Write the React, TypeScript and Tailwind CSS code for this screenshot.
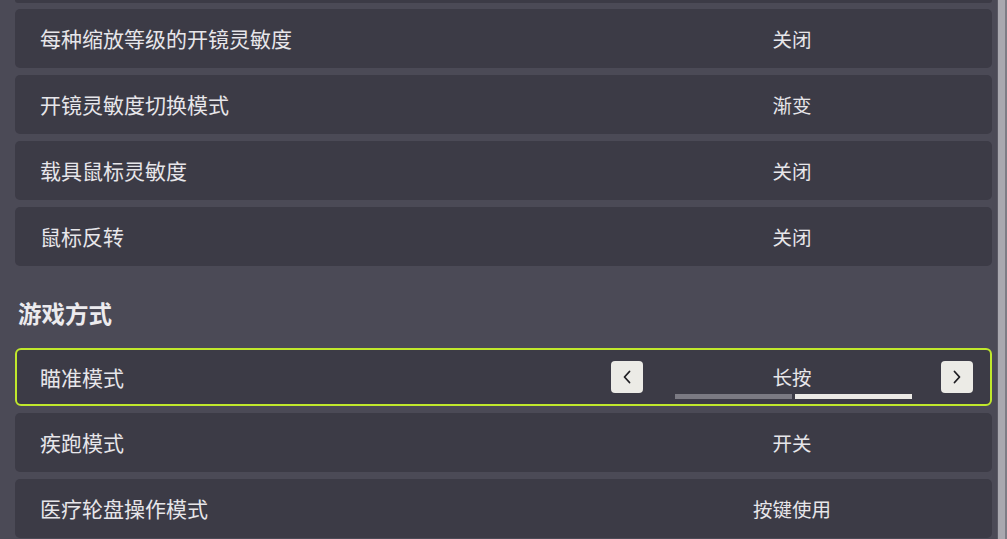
import React from 'react';

const FONT = { fontFamily: '"Noto Sans CJK SC", "Noto Sans", sans-serif' };

interface RowProps {
  label: string;
  value: string;
}

const Row: React.FC<RowProps> = ({ label, value }) => (
  <div className="flex h-[59px] items-center rounded-[5px] bg-[#3c3b46]">
    <span className="flex-1 pl-[25px] pt-[1px] text-[21px] text-[#e7e6ea]">{label}</span>
    <div className="mr-[19px] flex w-[362px] justify-center">
      <span className="pt-[1px] text-[19.5px] text-[#e7e6ea]">{value}</span>
    </div>
  </div>
);

const Chevron: React.FC<{ dir: 'left' | 'right' }> = ({ dir }) => (
  <svg width="10" height="14" viewBox="0 0 10 14" fill="none">
    <polyline
      points={dir === 'left' ? '7.5,1.5 2.5,7 7.5,12.5' : '2.5,1.5 7.5,7 2.5,12.5'}
      stroke="#1f1e22"
      strokeWidth="1.8"
      strokeLinecap="round"
      strokeLinejoin="round"
    />
  </svg>
);

const SelectRow: React.FC<RowProps> = ({ label, value }) => (
  <div className="flex h-[58px] items-center rounded-[6px] border-2 border-[#c0e82c] bg-[#3c3b46]">
    <span className="flex-1 pl-[23px] pt-[1px] text-[21px] text-[#e7e6ea]">{label}</span>
    <div className="relative mr-[17px] flex w-[362px] items-center justify-between">
      <button className="flex h-[32px] w-[32px] items-center justify-center rounded-[4px] bg-[#ecebe6]">
        <Chevron dir="left" />
      </button>
      <span className="text-[19.5px] text-[#e7e6ea]">{value}</span>
      <button className="flex h-[32px] w-[32px] items-center justify-center rounded-[4px] bg-[#ecebe6]">
        <Chevron dir="right" />
      </button>
      {/* option indicator */}
      <div className="absolute left-[64px] top-[33px] flex gap-[3px]">
        <div className="h-[5px] w-[117px] bg-[#7b7a83]" />
        <div className="h-[5px] w-[117px] bg-[#ebe9e5]" />
      </div>
    </div>
  </div>
);

export default function App() {
  return (
    <div className="flex h-[539px] w-[1007px] overflow-hidden bg-[#4b4a56]" style={FONT}>
      <div className="flex-1 pl-[15px] pr-[5px]">
        {/* previous row, mostly scrolled out */}
        <div className="h-[3px] rounded-b-[5px] bg-[#3c3b46]" />
        <div className="mt-[6px] flex flex-col gap-[7px]">
          <Row label="每种缩放等级的开镜灵敏度" value="关闭" />
          <Row label="开镜灵敏度切换模式" value="渐变" />
          <Row label="载具鼠标灵敏度" value="关闭" />
          <Row label="鼠标反转" value="关闭" />
        </div>

        <div className="h-[82px] pl-[3px] pt-[34px]">
          <h2 className="text-[23.5px] font-bold leading-[26px] text-[#ecebee]">游戏方式</h2>
        </div>

        <div className="flex flex-col gap-[7px]">
          <SelectRow label="瞄准模式" value="长按" />
          <Row label="疾跑模式" value="开关" />
          <Row label="医疗轮盘操作模式" value="按键使用" />
        </div>
      </div>

      {/* scrollbar */}
      <div className="flex w-[10px]">
        <div className="w-[1px] bg-[#5a5964]" />
        <div className="w-[7px] bg-[#a9a8af]" />
        <div className="w-[2px] bg-[#7d7c85]" />
      </div>
    </div>
  );
}
